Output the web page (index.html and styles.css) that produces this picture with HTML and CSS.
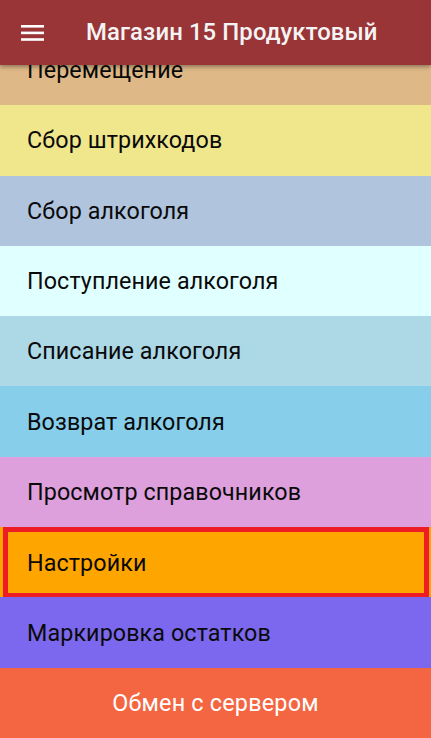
FILE: index.html
```html
<!DOCTYPE html>
<html lang="ru">
<head>
<meta charset="utf-8">
<link rel="stylesheet" href="styles.css">
</head>
<body>
<div class="screen">
  <header class="appbar">
    <svg class="menu-icon" width="24" height="18" viewBox="0 0 24 18">
      <rect x="0" y="1" width="23" height="2.6" fill="#fff"/>
      <rect x="0" y="7.6" width="23" height="2.6" fill="#fff"/>
      <rect x="0" y="14.2" width="23" height="2.6" fill="#fff"/>
    </svg>
    <h1 class="title">Магазин 15 Продуктовый</h1>
  </header>
  <main class="list">
    <div class="items">
      <div class="item c-burly">Перемещение</div>
      <div class="item c-khaki">Сбор штрихкодов</div>
      <div class="item c-steel">Сбор алкоголя</div>
      <div class="item c-cyan">Поступление алкоголя</div>
      <div class="item c-lblue">Списание алкоголя</div>
      <div class="item c-sky">Возврат алкоголя</div>
      <div class="item c-plum">Просмотр справочников</div>
      <div class="item c-orange selected"><span class="frame">Настройки</span></div>
      <div class="item c-slate">Маркировка остатков</div>
    </div>
  </main>
  <button class="exchange">Обмен с сервером</button>
</div>
</body>
</html>
```

FILE: styles.css
```css
html, body {
  margin: 0;
  padding: 0;
}
body {
  width: 431px;
  height: 738px;
  overflow: hidden;
  font-family: Roboto, "Noto Sans", sans-serif;
}
.screen {
  position: relative;
  width: 431px;
  height: 738px;
  display: flex;
  flex-direction: column;
  overflow: hidden;
}
.appbar {
  position: absolute;
  top: 0;
  left: 0;
  right: 0;
  height: 65px;
  background: #993437;
  display: flex;
  align-items: center;
  padding-left: 21px;
  box-shadow: 0 2px 4px rgba(0,0,0,0.35);
  z-index: 2;
}
.menu-icon {
  display: block;
  margin-top: 1px;
}
.title {
  margin: 0 0 0 41px;
  color: #f4f4f4;
  font-size: 23.9px;
  font-weight: 500;
  letter-spacing: 0.1px;
  line-height: 1;
}
.list {
  flex: 1;
  overflow: hidden;
}
.items {
  margin-top: 35px;
  display: flex;
  flex-direction: column;
}
.item {
  height: 70.3px;
  box-sizing: border-box;
  display: flex;
  align-items: center;
  padding-left: 27px;
  font-size: 23.3px;
  color: #0a0a0a;
  letter-spacing: 0.1px;
}
.c-burly { background: #deb887; }
.c-khaki { background: #f0e68c; }
.c-steel { background: #b0c4de; }
.c-cyan { background: #e0ffff; }
.c-lblue { background: #add8e6; }
.c-sky { background: #87ceeb; }
.c-plum { background: #dda0dd; }
.c-orange { background: #ffa500; }
.c-slate { background: #7b68ee; }
.item.selected {
  padding: 0 2px 0 3px;
}
.frame {
  flex: 1;
  align-self: stretch;
  display: flex;
  align-items: center;
  border: 5px solid #ee1c25;
  padding-left: 19px;
  margin-bottom: -1px;
}
.exchange {
  height: 70.3px;
  flex: none;
  width: 100%;
  border: none;
  margin: 0;
  background: #f46642;
  color: #fff;
  font-family: Roboto, "Noto Sans", sans-serif;
  font-size: 23.4px;
  letter-spacing: 0.2px;
  padding: 0;
}
```
